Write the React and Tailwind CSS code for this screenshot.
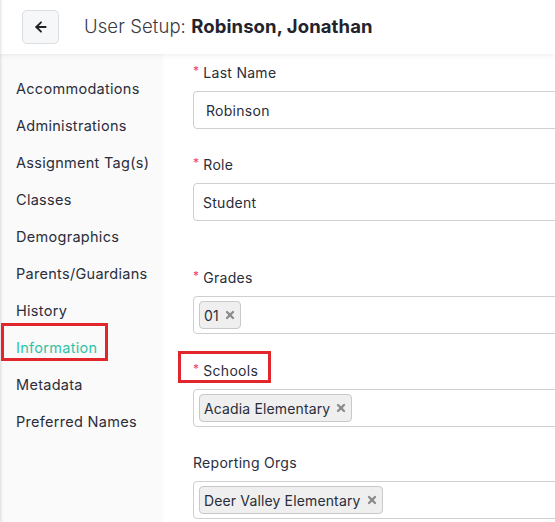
import React from "react";
import { ArrowLeft, X } from "lucide-react";

const font = { fontFamily: "Inter, 'Open Sans', sans-serif" };

const sections = [
    "Accommodations",
    "Administrations",
    "Assignment Tag(s)",
    "Classes",
    "Demographics",
    "Parents/Guardians",
    "History",
    "Information",
    "Metadata",
    "Preferred Names",
];

const Label = ({ required, children, marked }) => (
    <div className="relative h-[20px] flex items-center text-[14px] tracking-[0.02em] text-[#2a2d3a]">
        {required && <span className="text-[#f5405b] text-[12px] mr-[4px] -mt-[2px]">*</span>}
        <span>{children}</span>
        {marked && (
            <span className="absolute left-[-15px] top-[-9px] w-[93px] h-[32px] border-[3px] border-[#e1262c]" />
        )}
    </div>
);

const Chip = ({ children }) => (
    <span className="inline-flex items-center h-[28px] pl-[4px] pr-[4px] gap-[5px] bg-[#efefef] border border-[#c9c9c9] rounded-[4px] text-[14px] tracking-[0.01em] text-[#2a2d3a]">
        {children}
        <X size={12} strokeWidth={4.5} className="text-[#8a8a8a]" />
    </span>
);

const TextBox = ({ value, pad = "pl-[12px]" }) => (
    <div className={`mt-[9px] w-[420px] h-[38px] border border-[#cfcfcf] rounded-[4px] flex items-center ${pad} text-[14px] tracking-[0.02em] text-[#2a2d3a]`}>
        {value}
    </div>
);

const ChipBox = ({ chip }) => (
    <div className="mt-[9px] w-[420px] h-[38px] border border-[#cfcfcf] rounded-[4px] flex items-center pl-[5px]">
        <Chip>{chip}</Chip>
    </div>
);

export default function App() {
    return (
        <div className="w-[555px] h-[522px] overflow-hidden bg-white flex flex-col" style={font}>
            {/* Page header */}
            <header className="relative z-10 h-[54px] shrink-0 bg-white flex items-center pl-[22px] gap-[25px] shadow-[0_2px_5px_rgba(0,0,0,0.06),inset_3px_0_3px_-2px_rgba(0,0,0,0.12)]">
                <button className="w-[37px] h-[34px] flex items-center justify-center bg-[#f6f7f9] border border-[#dcdde0] rounded-[5px] text-[#222]">
                    <ArrowLeft size={16} strokeWidth={2.75} />
                </button>
                <h1 className="text-[18.5px] tracking-[0.005em] text-[#3a3a44] font-light">
                    User Setup: <span className="font-bold text-[#23232b]">Robinson, Jonathan</span>
                </h1>
            </header>

            <div className="flex flex-1 min-h-0">
                {/* Section nav */}
                <nav className="w-[163px] shrink-0 bg-[#fafafa] pt-[16px] shadow-[inset_3px_0_3px_-2px_rgba(0,0,0,0.12)]">
                    {sections.map((name) => {
                        const active = name === "Information";
                        return (
                            <div
                                key={name}
                                className={`relative h-[37px] flex items-center pl-[16px] text-[14.5px] tracking-[0.02em] ${active ? "text-[#2fc3a6]" : "text-[#2a2d3a]"}`}
                            >
                                {name}
                                {active && (
                                    <span className="absolute left-[1px] top-[-6px] w-[107px] h-[38px] border-[3px] border-[#e1262c]" />
                                )}
                            </div>
                        );
                    })}
                </nav>

                {/* Form */}
                <main className="flex-1 min-w-0 overflow-hidden bg-white pl-[30px] pt-[8px]">
                    <Label required>Last Name</Label>
                    <TextBox value="Robinson" pad="pl-[12px]" />

                    <div className="mt-[25px]">
                        <Label required>Role</Label>
                        <TextBox value="Student" pad="pl-[9px]" />
                    </div>

                    <div className="mt-[46px]">
                        <Label required>Grades</Label>
                        <ChipBox chip="01" />
                    </div>

                    <div className="mt-[26px]">
                        <Label required marked>Schools</Label>
                        <ChipBox chip="Acadia Elementary" />
                    </div>

                    <div className="mt-[25px]">
                        <Label>Reporting Orgs</Label>
                        <ChipBox chip="Deer Valley Elementary" />
                    </div>
                </main>
            </div>
        </div>
    );
}
